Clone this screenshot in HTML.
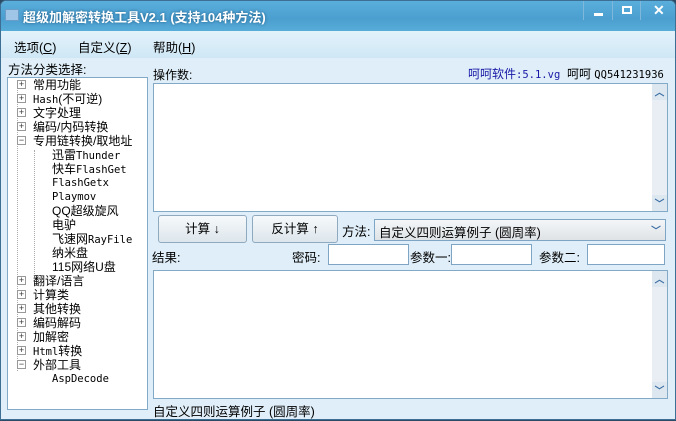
<!DOCTYPE html>
<html><head><meta charset="utf-8"><style>
*{margin:0;padding:0;box-sizing:border-box}
body{width:676px;height:421px;overflow:hidden;background:#2b4a63;font-family:"Liberation Sans","Noto Sans CJK SC",sans-serif;font-size:12px;color:#000;position:relative}
.win{position:absolute;left:0;top:0;width:676px;height:420px;background:#dfeef8;border-radius:6px 6px 0 0;overflow:hidden;border:1px solid #3d6f95}
.title{position:absolute;left:0;top:0;width:676px;height:30px;background:linear-gradient(#5aaedb,#4b9fd0 60%,#58acd8)}
.title .t{position:absolute;left:22px;top:6px;color:#fff;font-weight:bold;font-size:13px;text-shadow:0 0 3px #1c5a85}
.ico{position:absolute;left:4px;top:8px;width:14px;height:12px;background:#9fc6e6;border:1px solid #6a9dc9}
.cb{position:absolute;top:0;height:19px;border-left:1px solid #7fb8da}
.menu{position:absolute;left:0;top:30px;width:676px;height:27px;background:linear-gradient(#e3f2fb,#cfe7f5)}
.menu span{position:absolute;top:6px;font-size:12.5px}
.a{position:absolute;white-space:nowrap}
.tree{position:absolute;left:6px;top:76px;width:141px;height:333px;background:#fff;border:1px solid #82a9c6}
.tree div{position:absolute;white-space:nowrap;font-size:12px;line-height:14px}
.pm{position:absolute;width:9px;height:9px;border:1px solid #999;background:#fff;font-size:9px;line-height:7px;text-align:center;color:#333}
.mono{font-family:"DejaVu Sans Mono","Liberation Mono","Noto Sans CJK SC",monospace !important;font-size:10.5px !important}
.ta{position:absolute;background:#fff;border:1px solid #82a9c6}
.sb{position:absolute;right:0;top:0;width:15px;height:100%;background:#e8eef3}
.sb .u,.sb .d{position:absolute;left:0;width:15px;height:16px;color:#3a6ea5;font-size:10px;font-weight:bold;text-align:center;background:#dde7ef}
.btn{position:absolute;height:28px;border:1px solid #8fa9bf;border-radius:3px;background:linear-gradient(#f6f9fb,#dde6ec);text-align:center;line-height:26px;font-size:12.5px}
.inp{position:absolute;height:21px;background:#fff;border:1px solid #7ea6c4}
</style></head><body>
<div class="win">
<div class="title"><div class="ico"></div><div class="t">超级加解密转换工具V2.1 (支持104种方法)</div>
<div class="cb" style="left:582px;width:29px"><div style="position:absolute;left:10px;top:12px;width:9px;height:3px;background:#fff"></div></div>
<div class="cb" style="left:611px;width:28px"><div style="position:absolute;left:9px;top:5px;width:10px;height:8px;border:2px solid #fff;border-top-width:2px"></div></div>
<div class="cb" style="left:639px;width:37px;border-right:0"><div style="position:absolute;left:12px;top:1px;color:#fff;font-weight:bold;font-size:14px">✕</div></div>
</div>
<div class="menu"><span style="left:13px">选项(<u>C</u>)</span><span style="left:77px">自定义(<u>Z</u>)</span><span style="left:152px">帮助(<u>H</u>)</span></div>
<div class="a" style="left:7px;top:58px;font-size:12.5px">方法分类选择:</div>
<div class="a" style="left:152px;top:65px">操作数:</div>
<div class="a" style="left:467px;top:64px;color:#1a1aa8">呵呵软件<span class="mono">:5.1.vg</span> <span style="color:#000">&nbsp;呵呵 <span class="mono">QQ541231936</span></span></div>
<div class="tree">
<div style="left:9px;top:3px;width:1px;height:290px;border-left:1px dotted #aaa"></div>
<div style="left:26px;top:72px;width:1px;height:124px;border-left:1px dotted #aaa"></div>
<div style="left:9px;top:0px"><span class="pm" style="left:0;top:2px">+</span><span style="margin-left:16px">常用功能</span></div>
<div style="left:9px;top:14px"><span class="pm" style="left:0;top:2px">+</span><span style="margin-left:16px"><span class="mono">Hash</span>(不可逆)</span></div>
<div style="left:9px;top:28px"><span class="pm" style="left:0;top:2px">+</span><span style="margin-left:16px">文字处理</span></div>
<div style="left:9px;top:42px"><span class="pm" style="left:0;top:2px">+</span><span style="margin-left:16px">编码/内码转换</span></div>
<div style="left:9px;top:56px"><span class="pm" style="left:0;top:2px">−</span><span style="margin-left:16px">专用链转换/取地址</span></div>
<div style="left:44px;top:70px">迅雷<span class="mono">Thunder</span></div>
<div style="left:44px;top:84px">快车<span class="mono">FlashGet</span></div>
<div style="left:44px;top:98px" class="mono">FlashGetx</div>
<div style="left:44px;top:112px" class="mono">Playmov</div>
<div style="left:44px;top:126px">QQ超级旋风</div>
<div style="left:44px;top:140px">电驴</div>
<div style="left:44px;top:154px">飞速网<span class="mono">RayFile</span></div>
<div style="left:44px;top:168px">纳米盘</div>
<div style="left:44px;top:182px">115网络U盘</div>
<div style="left:9px;top:196px"><span class="pm" style="left:0;top:2px">+</span><span style="margin-left:16px">翻译/语言</span></div>
<div style="left:9px;top:210px"><span class="pm" style="left:0;top:2px">+</span><span style="margin-left:16px">计算类</span></div>
<div style="left:9px;top:224px"><span class="pm" style="left:0;top:2px">+</span><span style="margin-left:16px">其他转换</span></div>
<div style="left:9px;top:238px"><span class="pm" style="left:0;top:2px">+</span><span style="margin-left:16px">编码解码</span></div>
<div style="left:9px;top:252px"><span class="pm" style="left:0;top:2px">+</span><span style="margin-left:16px">加解密</span></div>
<div style="left:9px;top:266px"><span class="pm" style="left:0;top:2px">+</span><span style="margin-left:16px"><span class="mono">Html</span>转换</span></div>
<div style="left:9px;top:280px"><span class="pm" style="left:0;top:2px">−</span><span style="margin-left:16px">外部工具</span></div>
<div style="left:44px;top:294px" class="mono">AspDecode</div>
</div>
<div class="ta" style="left:152px;top:82px;width:515px;height:129px"><div class="sb"><div class="u" style="top:0">︿</div><div class="d" style="bottom:0">﹀</div></div></div>
<div class="btn" style="left:157px;top:214px;width:89px">计算 ↓</div>
<div class="btn" style="left:251px;top:214px;width:86px">反计算 ↑</div>
<div class="a" style="left:341px;top:220px;font-size:12.5px">方法:</div>
<div class="inp" style="left:373px;top:218px;width:292px;height:22px;background:linear-gradient(#f4f6f8,#dfe3e6)"><span style="position:absolute;left:4px;top:2px;font-size:12.5px">自定义四则运算例子 (圆周率)</span><span style="position:absolute;right:4px;top:2px;color:#3a6ea5;font-weight:bold;font-size:10px">﹀</span></div>
<div class="a" style="left:151px;top:246px;font-size:12.5px">结果:</div>
<div class="a" style="left:291px;top:246px;font-size:12.5px">密码:</div>
<div class="inp" style="left:327px;top:243px;width:81px"></div>
<div class="a" style="left:409px;top:246px;font-size:12.5px">参数一:</div>
<div class="inp" style="left:450px;top:243px;width:81px"></div>
<div class="a" style="left:538px;top:246px;font-size:12.5px">参数二:</div>
<div class="inp" style="left:586px;top:243px;width:78px"></div>
<div class="ta" style="left:152px;top:269px;width:515px;height:129px"><div class="sb"><div class="u" style="top:0">︿</div><div class="d" style="bottom:0">﹀</div></div></div>
<div class="a" style="left:152px;top:400px;font-size:12.5px">自定义四则运算例子 (圆周率)</div>
</div>
</body></html>
